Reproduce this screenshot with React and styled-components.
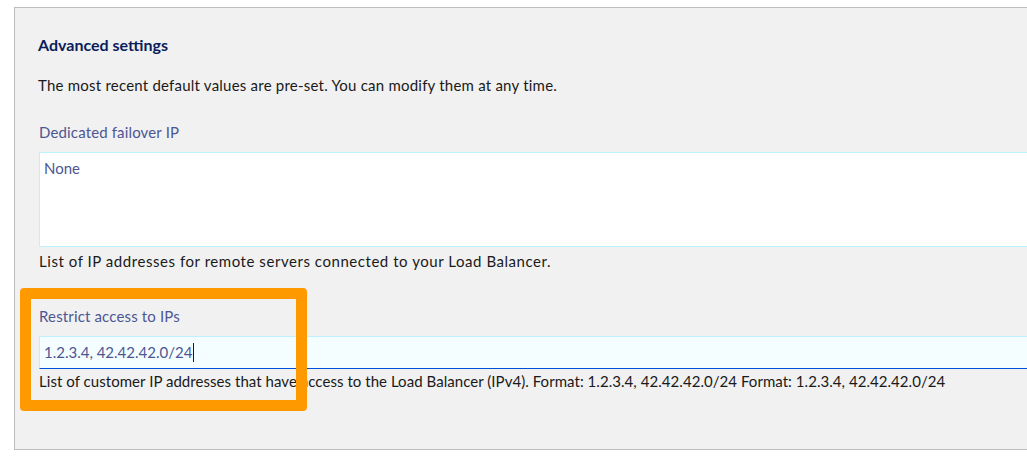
import React from 'react';
import styled, { createGlobalStyle } from 'styled-components';

const GlobalStyle = createGlobalStyle`
  body {
    margin: 0;
    background: #fff;
    overflow: hidden;
    font-family: "Lato", "Liberation Sans", sans-serif;
  }
`;

const Page = styled.div`
  padding: 7px 0 0 14px;
  width: 1200px;
`;

const Panel = styled.section`
  background: #f1f1f1;
  border: 1px solid #bdbdbd;
  border-right: none;
  height: 443px;
  box-sizing: border-box;
  padding: 27px 0 0 23px;
`;

const Title = styled.h4`
  margin: 0;
  font-size: 16px;
  line-height: 20px;
  font-weight: 700;
  color: #0b1d5b;
`;

const Description = styled.p`
  margin: 20px 0 0;
  font-size: 15px;
  line-height: 20px;
  letter-spacing: 0.22px;
  color: #1a1a1a;
`;

const Field = styled.div`
  position: relative;
  margin-top: ${(p) => p.gap}px;
  padding-left: 1px;
`;

const Label = styled.label`
  display: block;
  font-size: 15px;
  line-height: 20px;
  letter-spacing: 0.15px;
  color: #4d5693;
  margin-bottom: 10px;
`;

const TextArea = styled.div`
  width: 1100px;
  height: 95px;
  box-sizing: border-box;
  background: #fff;
  border: 1px solid #bef1ff;
  padding: 5px 4px;
  font-size: 15px;
  line-height: 20px;
  color: #4d5693;
`;

const Input = styled.div`
  width: 1100px;
  height: 33px;
  box-sizing: border-box;
  background: #f4fdff;
  border: 1px solid #bef1ff;
  border-bottom: 1px solid #0050d7;
  padding: 5px 4px;
  font-size: 15px;
  line-height: 21px;
  color: #4d5693;
  display: flex;
  align-items: center;
`;

const Caret = styled.span`
  display: inline-block;
  width: 1px;
  height: 19px;
  background: #1a1a1a;
  margin-left: 1px;
`;

const Helper = styled.div`
  margin-top: ${(p) => p.gap}px;
  font-size: 15px;
  line-height: 20px;
  letter-spacing: ${(p) => p.spacing || 0.05}px;
  color: #1a1a1a;
`;

const Highlight = styled.div`
  position: absolute;
  left: -18px;
  top: -18px;
  width: 287px;
  height: 123px;
  box-sizing: border-box;
  border: 11px solid #ff9900;
  border-radius: 4px;
  pointer-events: none;
`;

export default function App() {
  return (
    <>
      <GlobalStyle />
      <Page>
        <Panel>
          <Title>Advanced settings</Title>
          <Description>
            The most recent default values are pre-set. You can modify them at any time.
          </Description>

          <Field gap={27}>
            <Label>Dedicated failover IP</Label>
            <TextArea>None</TextArea>
            <Helper gap={4} spacing={0.55}>
              List of IP addresses for remote servers connected to your Load Balancer.
            </Helper>
          </Field>

          <Field gap={35}>
            <Label>Restrict access to IPs</Label>
            <Input>
              1.2.3.4, 42.42.42.0/24
              <Caret />
            </Input>
            <Helper gap={2}>
              List of customer IP addresses that have access to the Load Balancer (IPv4). Format: 1.2.3.4, 42.42.42.0/24 Format: 1.2.3.4, 42.42.42.0/24
            </Helper>
            <Highlight />
          </Field>
        </Panel>
      </Page>
    </>
  );
}
